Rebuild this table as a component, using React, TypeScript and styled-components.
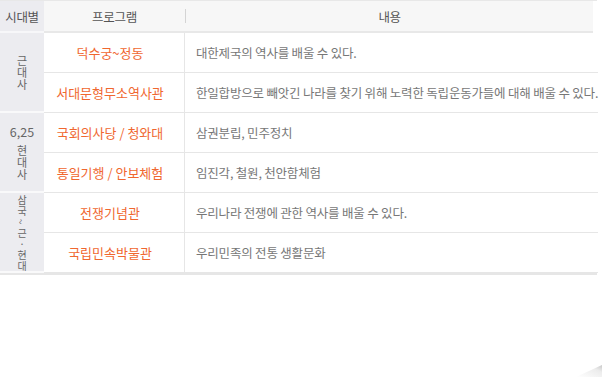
import styled, { createGlobalStyle } from "styled-components";

type Program = {
  title: string;
  description: string;
};

type Period = {
  label: string[];
  prefix?: string;
  programs: Program[];
};

const periods: Period[] = [
  {
    label: ["근", "대", "사"],
    programs: [
      { title: "덕수궁~정동", description: "대한제국의 역사를 배울 수 있다." },
      {
        title: "서대문형무소역사관",
        description:
          "한일합방으로 빼앗긴 나라를 찾기 위해 노력한 독립운동가들에 대해 배울 수 있다.",
      },
    ],
  },
  {
    label: ["현", "대", "사"],
    prefix: "6,25",
    programs: [
      { title: "국회의사당 / 청와대", description: "삼권분립, 민주정치" },
      { title: "통일기행 / 안보체험", description: "임진각, 철원, 천안함체험" },
    ],
  },
  {
    label: ["삼", "국", "~", "근", "·", "현", "대"],
    programs: [
      { title: "전쟁기념관", description: "우리나라 전쟁에 관한 역사를 배울 수 있다." },
      { title: "국립민속박물관", description: "우리민족의 전통 생활문화" },
    ],
  },
];

const GlobalStyle = createGlobalStyle`
  body {
    margin: 0;
    background: #ffffff;
    font-family: "Noto Sans CJK KR", "Noto Sans", sans-serif;
  }
`;

const Page = styled.div`
  position: relative;
  width: 602px;
  height: 377px;
  overflow: hidden;
  background: #ffffff;
`;

const Table = styled.div`
  display: grid;
  grid-template-columns: 44px 141px 1fr;
  grid-template-rows: 32px;
  grid-auto-rows: 40px;
  width: 597px;
  border-top: 1px solid #e8e8e8;
  border-bottom: 2px solid #e6e6e6;
`;

const HeaderCell = styled.div<{ $side?: boolean }>`
  display: flex;
  align-items: center;
  justify-content: center;
  background: ${({ $side }) => ($side ? "#ececf0" : "#f7f7f7")};
  border-bottom: 2px solid ${({ $side }) => ($side ? "#f7f7f9" : "#e8e8e8")};
  font-size: 12.5px;
  letter-spacing: -0.3px;
  color: #555555;
`;

const HeaderContent = styled(HeaderCell)`
  justify-content: flex-start;
  margin-right: 5px;
`;

const HeaderDivider = styled.span`
  width: 1px;
  height: 14px;
  background: #d4d4d4;
`;

const HeaderLabel = styled.span`
  flex: 1;
  text-align: center;
`;

const PeriodCell = styled.div<{ $rows: number }>`
  grid-row: span ${({ $rows }) => $rows};
  display: flex;
  flex-direction: column;
  align-items: center;
  justify-content: center;
  background: #ececf0;
  border-bottom: 2px solid #f9f9fa;
  color: #666666;
  font-size: 12px;

  &:last-of-type {
    border-bottom: none;
  }
`;

const PeriodPrefix = styled.span`
  font-size: 12.5px;
  line-height: 14px;
  margin-bottom: 5px;
  color: #666666;
`;

const PeriodChar = styled.span<{ $step: number; $turn?: boolean }>`
  display: block;
  font-size: ${({ $step }) => $step - 1}px;
  line-height: ${({ $step }) => $step}px;
  height: ${({ $step }) => $step}px;
  transform: ${({ $turn }) => ($turn ? "rotate(90deg)" : "none")};
`;

const ProgramCell = styled.div`
  display: flex;
  align-items: center;
  justify-content: center;
  padding-right: 8px;
  border-bottom: 1px solid #e6e6e6;
  border-right: 1px solid #e6e6e6;
  color: #f0672f;
  font-size: 13px;
  white-space: nowrap;
`;

const DescriptionCell = styled.div`
  display: flex;
  align-items: center;
  padding-left: 11px;
  border-bottom: 1px solid #e6e6e6;
  color: #777777;
  font-size: 12.5px;
  letter-spacing: -0.2px;
  white-space: nowrap;
`;

const PageCurl = styled.svg`
  position: absolute;
  right: 0;
  bottom: 0;
`;

export default function App() {
  return (
    <Page>
      <GlobalStyle />
      <Table>
        <HeaderCell $side>시대별</HeaderCell>
        <HeaderCell>프로그램</HeaderCell>
        <HeaderContent>
          <HeaderDivider />
          <HeaderLabel>내용</HeaderLabel>
        </HeaderContent>

        {periods.map((period) => {
          const step = period.label.length > 4 ? 11 : 12;
          return [
            <PeriodCell key={period.label.join("")} $rows={period.programs.length}>
              {period.prefix && <PeriodPrefix>{period.prefix}</PeriodPrefix>}
              {period.label.map((ch, i) => (
                <PeriodChar key={i} $step={step} $turn={ch === "~"}>
                  {ch}
                </PeriodChar>
              ))}
            </PeriodCell>,
            ...period.programs.map((p, i) => [
              <ProgramCell key={`t${i}${p.title}`}>{p.title}</ProgramCell>,
              <DescriptionCell key={`d${i}${p.title}`}>{p.description}</DescriptionCell>,
            ]),
          ];
        })}
      </Table>

      <PageCurl width="28" height="14" viewBox="0 0 28 14">
        <defs>
          <linearGradient id="curl" x1="0" y1="1" x2="1" y2="0">
            <stop offset="0" stopColor="#ffffff" />
            <stop offset="0.7" stopColor="#ececec" />
            <stop offset="1" stopColor="#c8c8c8" />
          </linearGradient>
        </defs>
        <polygon points="2,14 28,2 28,14" fill="url(#curl)" />
      </PageCurl>
    </Page>
  );
}
